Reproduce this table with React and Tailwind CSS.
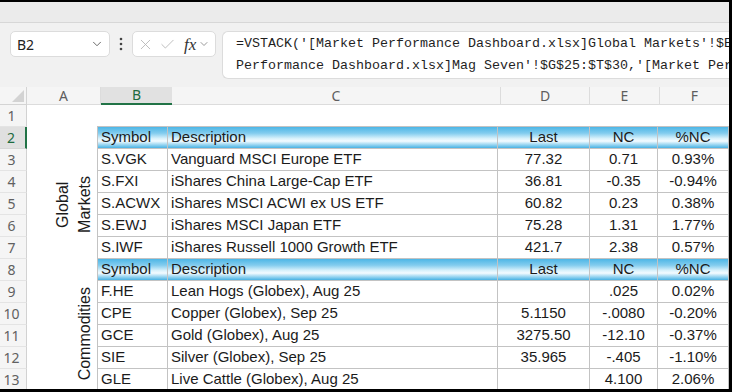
import React from "react";
import { ChevronDown, X, Check } from "lucide-react";

const groups = [
  {
    label: ["Global", "Markets"],
    rows: [
      ["S.VGK", "Vanguard MSCI Europe ETF", "77.32", "0.71", "0.93%"],
      ["S.FXI", "iShares China Large-Cap ETF", "36.81", "-0.35", "-0.94%"],
      ["S.ACWX", "iShares MSCI ACWI ex US ETF", "60.82", "0.23", "0.38%"],
      ["S.EWJ", "iShares MSCI Japan ETF", "75.28", "1.31", "1.77%"],
      ["S.IWF", "iShares Russell 1000 Growth ETF", "421.7", "2.38", "0.57%"],
    ],
  },
  {
    label: ["Commodities"],
    rows: [
      ["F.HE", "Lean Hogs (Globex), Aug 25", "", ".025", "0.02%"],
      ["CPE", "Copper (Globex), Sep 25", "5.1150", "-.0080", "-0.20%"],
      ["GCE", "Gold (Globex), Aug 25", "3275.50", "-12.10", "-0.37%"],
      ["SIE", "Silver (Globex), Sep 25", "35.965", "-.405", "-1.10%"],
      ["GLE", "Live Cattle (Globex), Aug 25", "", "4.100", "2.06%"],
    ],
  },
];

const header = ["Symbol", "Description", "Last", "NC", "%NC"];

const cellCls = [
  "border-l border-r border-b border-[#c3c3c3] pl-[3px] flex items-center whitespace-nowrap overflow-hidden",
  "border-r border-b border-[#c3c3c3] pl-[3px] flex items-center whitespace-nowrap overflow-hidden",
  "border-r border-b border-[#c3c3c3] flex items-center justify-center whitespace-nowrap overflow-hidden",
  "border-r border-b border-[#c3c3c3] flex items-center justify-center whitespace-nowrap overflow-hidden",
  "border-r border-b border-[#c3c3c3] flex items-center justify-center whitespace-nowrap overflow-hidden",
];

function TableRow({ cells, head }) {
  return (
    <div
      className={
        head
          ? "grid grid-cols-[71px_330px_92px_68px_71px] h-[22px] text-[15px] text-[#1b1b1b] bg-[linear-gradient(to_bottom,#4db6e6_0%,#82ccee_28%,#d8f1fb_52%,#f4fbff_64%,#86cdee_84%,#31a7de_100%)]"
          : "grid grid-cols-[71px_330px_92px_68px_71px] h-[22px] text-[15px] text-[#1b1b1b]"
      }
    >
      {cells.map((c, i) => (
        <div key={i} className={cellCls[i]}>
          {c}
        </div>
      ))}
    </div>
  );
}

function RowHeaders() {
  const nums = Array.from({ length: 13 }, (_, i) => i + 1);
  return (
    <div className="w-[27px] shrink-0 flex flex-col bg-[#f5f5f5] font-['Noto_Sans',sans-serif] text-[14px]">
      {nums.map((n) =>
        n === 2 ? (
          <div
            key={n}
            className="h-[22px] shrink-0 flex items-center justify-center pr-[3px] bg-[#e0e0e0] text-[#1e6b40] border-r-2 border-[#217346] border-b border-b-[#d6d6d6]"
          >
            {n}
          </div>
        ) : (
          <div
            key={n}
            className="h-[22px] shrink-0 flex items-center justify-center pr-[3px] text-[#616161] border-r border-[#d2d2d2] border-b border-b-[#e4e4e4]"
          >
            {n}
          </div>
        )
      )}
    </div>
  );
}

function VLabel({ lines, extra }) {
  return (
    <div className={"h-[110px] shrink-0 flex items-center justify-end pr-[1px] " + extra}>
      <div className="[writing-mode:vertical-rl] rotate-180 text-[16px] leading-[22px] text-[#1b1b1b] text-center whitespace-nowrap">
        {lines.map((l, i) => (
          <div key={i}>{l}</div>
        ))}
      </div>
    </div>
  );
}

export default function App() {
  return (
    <div className="w-[732px] h-[392px] overflow-hidden bg-white border-t-2 border-r-[3px] border-b-[3px] border-black flex flex-col font-['Liberation_Sans',Arial,sans-serif]">
      {/* top band */}
      <div className="h-[21px] shrink-0 bg-[#ebebeb] border-b border-[#d7d7d7]" />

      {/* formula bar */}
      <div className="h-[64px] shrink-0 bg-[#f1f1f1] flex items-start pt-[8px] pl-[10px]">
        <div className="w-[100px] h-[26px] shrink-0 rounded-[5px] bg-white border border-[#dcdcdc] flex items-center justify-between pl-[6px] pr-[5px] font-['Noto_Sans',sans-serif] text-[14px] text-[#222]">
          <span>B2</span>
          <ChevronDown size={14} strokeWidth={1.5} color="#555" />
        </div>
        <div className="w-[22px] h-[26px] shrink-0 flex items-center justify-center">
          <svg width="4" height="14" viewBox="0 0 4 14">
            <circle cx="2" cy="2" r="1.3" fill="#444" />
            <circle cx="2" cy="7" r="1.3" fill="#444" />
            <circle cx="2" cy="12" r="1.3" fill="#444" />
          </svg>
        </div>
        <div className="w-[84px] h-[26px] shrink-0 rounded-[5px] bg-white border border-[#dcdcdc] flex items-center pl-[4px]">
          <X size={17} strokeWidth={1.2} color="#b3b3b3" />
          <Check size={17} strokeWidth={1.2} color="#b3b3b3" className="ml-[5px]" />
          <span className="ml-[8px] font-['Liberation_Serif',serif] italic text-[17px] leading-none text-[#333]">
            fx
          </span>
          <ChevronDown size={12} strokeWidth={1.5} color="#777" className="ml-[2px]" />
        </div>
        <div className="ml-[6px] flex-1 h-[48px] rounded-l-[6px] bg-white border border-r-0 border-[#dcdcdc] pl-[13px] pt-[1px] overflow-hidden font-['Liberation_Mono',monospace] text-[13.33px] leading-[22px] text-[#1f1f1f] whitespace-nowrap">
          <div>=VSTACK('[Market Performance Dashboard.xlsx]Global Markets'!$E</div>
          <div>Performance Dashboard.xlsx]Mag Seven'!$G$25:$T$30,'[Market Per</div>
        </div>
      </div>

      {/* column headers */}
      <div className="h-[18px] shrink-0 flex bg-[#f5f5f5] font-['Noto_Sans',sans-serif] text-[14px] text-[#5e5e5e] leading-none">
        <div className="w-[27px] shrink-0 border-r border-b border-[#d4d4d4]">
          <svg width="26" height="17" viewBox="0 0 26 17">
            <polygon points="12,15 24,3 24,15" fill="#d3d3d3" />
          </svg>
        </div>
        <div className="w-[74px] shrink-0 flex items-center justify-center border-r border-b border-[#dcdcdc]">A</div>
        <div className="w-[71px] shrink-0 flex items-center justify-center bg-[#e1e1e1] text-[#1e6b40] border-b-2 border-[#217346]">B</div>
        <div className="w-[329px] shrink-0 flex items-center justify-center border-r border-b border-[#dcdcdc]">C</div>
        <div className="w-[89px] shrink-0 flex items-center justify-center border-r border-b border-[#dcdcdc]">D</div>
        <div className="w-[70px] shrink-0 flex items-center justify-center border-r border-b border-[#dcdcdc]">E</div>
        <div className="flex-1 flex items-center justify-center border-b border-[#dcdcdc]">F</div>
      </div>

      {/* body */}
      <div className="flex-1 flex overflow-hidden">
        <RowHeaders />
        <div className="w-[70px] shrink-0 flex flex-col">
          <div className="h-[44px] shrink-0" />
          <VLabel lines={groups[0].label} extra="" />
          <div className="h-[22px] shrink-0" />
          <VLabel lines={groups[1].label} extra="pb-[5px]" />
        </div>
        <div className="w-[632px] shrink-0 flex flex-col">
          <div className="h-[22px] shrink-0 border-b border-[#c3c3c3]" />
          {groups.map((g, gi) => (
            <React.Fragment key={gi}>
              <TableRow cells={header} head />
              {g.rows.map((r, ri) => (
                <TableRow key={ri} cells={r} />
              ))}
            </React.Fragment>
          ))}
        </div>
      </div>
    </div>
  );
}
